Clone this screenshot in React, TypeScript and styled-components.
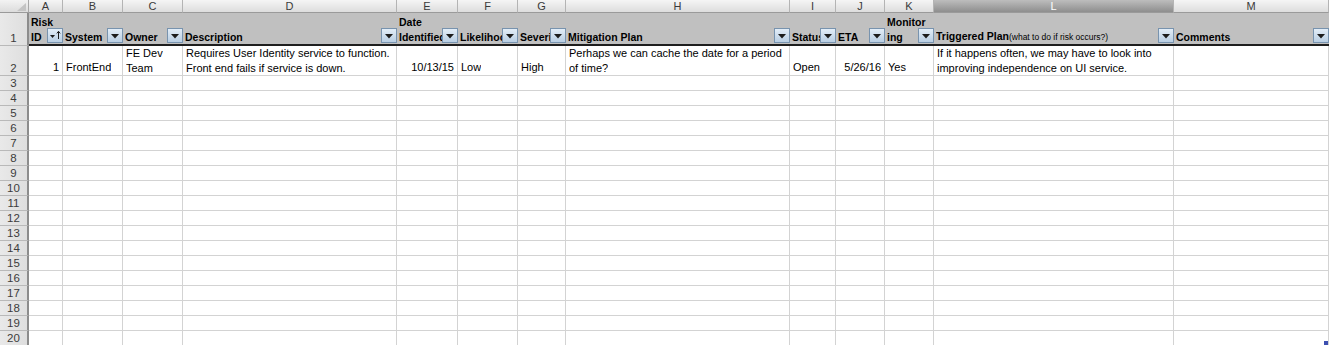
import React from "react";
import styled, { createGlobalStyle } from "styled-components";

const GlobalStyle = createGlobalStyle`
  html, body {
    margin: 0;
    padding: 0;
    background: #ffffff;
    overflow: hidden;
  }
  body {
    font-family: "Liberation Sans", Arial, sans-serif;
  }
`;

const COLUMNS = [
  { letter: "A", width: 34 },
  { letter: "B", width: 60 },
  { letter: "C", width: 60 },
  { letter: "D", width: 214 },
  { letter: "E", width: 61 },
  { letter: "F", width: 60 },
  { letter: "G", width: 48 },
  { letter: "H", width: 224 },
  { letter: "I", width: 46 },
  { letter: "J", width: 49 },
  { letter: "K", width: 49 },
  { letter: "L", width: 240 },
  { letter: "M", width: 155 },
];

const SELECTED_COLUMN = "L";

const Sheet = styled.div`
  display: grid;
  grid-template-columns: 29px ${COLUMNS.map((c) => `${c.width}px`).join(" ")};
  grid-template-rows: 13px 33px 30px repeat(18, 15px);
  width: 1329px;
  height: 345px;
  overflow: hidden;
  font-size: 11px;
  color: #000;
`;

const Corner = styled.div`
  position: relative;
  box-sizing: border-box;
  background: linear-gradient(#f3f3f3, #dcdcdc);
  border-right: 1px solid #a8a8a8;
  border-bottom: 1px solid #9a9a9a;
`;

const CornerMark = styled.div`
  position: absolute;
  right: 2px;
  bottom: 1px;
  width: 0;
  height: 0;
  border-left: 9px solid transparent;
  border-bottom: 8px solid #c4c4c4;
`;

const ColLetter = styled.div<{ $selected: boolean }>`
  box-sizing: border-box;
  display: flex;
  align-items: center;
  justify-content: center;
  font-size: 11px;
  line-height: 12px;
  color: ${(p) => (p.$selected ? "#ffffff" : "#3a3a3a")};
  background: ${(p) =>
    p.$selected ? "linear-gradient(#bdbdbd, #8e8e8e)" : "linear-gradient(#f5f5f5, #dddddd)"};
  border-right: 1px solid #b4b4b4;
  border-bottom: 1px solid #9a9a9a;
`;

const RowNum = styled.div`
  box-sizing: border-box;
  display: flex;
  align-items: flex-end;
  justify-content: center;
  padding-bottom: 0;
  font-size: 11.5px;
  line-height: 14px;
  color: #3c3c3c;
  background: linear-gradient(90deg, #e9e9e9, #dedede);
  border-right: 2px solid #8c8c8c;
  border-bottom: 1px solid #b9b9b9;
`;

const HeaderCell = styled.div`
  position: relative;
  box-sizing: border-box;
  display: flex;
  flex-direction: column;
  justify-content: flex-end;
  overflow: hidden;
  padding: 0 0 0 2px;
  background: #c0c0c0;
  border-bottom: 2px solid #1e1e1e;
  font-weight: bold;
  font-size: 10.5px;
  line-height: 15px;
`;

const Line = styled.div`
  white-space: nowrap;
  overflow: hidden;
`;

const HeaderLine = styled(Line)`
  margin-bottom: -1px;
  & + & {
    margin-top: 1px;
  }
`;

const Note = styled.span`
  font-weight: normal;
  font-size: 8.5px;
`;

const FilterButton = styled.div`
  position: absolute;
  right: 0;
  bottom: 1px;
  width: 16px;
  height: 15px;
  line-height: 0;
`;

const Cell = styled.div<{ $align: "left" | "right" }>`
  box-sizing: border-box;
  display: flex;
  flex-direction: column;
  justify-content: flex-end;
  align-items: ${(p) => (p.$align === "right" ? "flex-end" : "flex-start")};
  padding: 0 3px 0 3px;
  overflow: hidden;
  line-height: 15px;
  background: #ffffff;
  border-right: 1px solid #d3d3d3;
  border-bottom: 1px solid #d3d3d3;
`;

const SheetWrap = styled.div`
  position: relative;
  width: 1329px;
  height: 345px;
  overflow: hidden;
`;

const FillHandle = styled.div`
  position: absolute;
  right: 1px;
  bottom: 0;
  width: 4px;
  height: 4px;
  background: #3d4fb0;
`;

type HeaderDef = { lines: React.ReactNode[]; sorted?: boolean };

const HEADERS: HeaderDef[] = [
  { lines: ["Risk", "ID"], sorted: true },
  { lines: ["System"] },
  { lines: ["Owner"] },
  { lines: ["Description"] },
  { lines: ["Date", "Identified"] },
  { lines: ["Likelihood"] },
  { lines: ["Severity"] },
  { lines: ["Mitigation Plan"] },
  { lines: ["Status"] },
  { lines: ["ETA"] },
  { lines: ["Monitor", "ing"] },
  { lines: [<>Triggered Plan<Note>(what to do if risk occurs?)</Note></>] },
  { lines: ["Comments"] },
];

type DataCell = { lines: string[]; align?: "left" | "right" };

const RISK_ROW: DataCell[] = [
  { lines: ["1"], align: "right" },
  { lines: ["FrontEnd"] },
  { lines: ["FE Dev", "Team"] },
  { lines: ["Requires User Identity service to function.", "Front end fails if service is down."] },
  { lines: ["10/13/15"], align: "right" },
  { lines: ["Low"] },
  { lines: ["High"] },
  { lines: ["Perhaps we can cache the date for a period", "of time?"] },
  { lines: ["Open"] },
  { lines: ["5/26/16"], align: "right" },
  { lines: ["Yes"] },
  { lines: ["If it happens often, we may have to look into", "improving independence on UI service."] },
  { lines: [] },
];

const EMPTY_ROWS = Array.from({ length: 18 }, (_, i) => i + 3);

function FilterIcon({ sorted }: { sorted?: boolean }) {
  return (
    <svg width="16" height="15" viewBox="0 0 16 15">
      <defs>
        <linearGradient id="fbg" x1="0" y1="0" x2="0" y2="1">
          <stop offset="0" stopColor="#e4eef8" />
          <stop offset="1" stopColor="#b7cde2" />
        </linearGradient>
      </defs>
      <rect x="0.5" y="0.5" width="15" height="14" fill="url(#fbg)" stroke="#7893ae" />
      {sorted ? (
        <>
          <path d="M3 7 H8 L5.5 10 Z" fill="#1c1c1c" />
          <path d="M11.5 11 V3.5 M9.8 5.4 L11.5 3.3 L13.2 5.4" stroke="#1c1c1c" strokeWidth="1" fill="none" />
        </>
      ) : (
        <path d="M4 6 H12 L8 10.5 Z" fill="#1c1c1c" />
      )}
    </svg>
  );
}

export default function App() {
  return (
    <>
      <GlobalStyle />
      <SheetWrap>
        <Sheet>
          <Corner>
            <CornerMark />
          </Corner>
          {COLUMNS.map((c) => (
            <ColLetter key={c.letter} $selected={c.letter === SELECTED_COLUMN}>
              {c.letter}
            </ColLetter>
          ))}

          <RowNum>1</RowNum>
          {HEADERS.map((h, i) => (
            <HeaderCell key={i}>
              {h.lines.map((line, j) => (
                <HeaderLine key={j}>{line}</HeaderLine>
              ))}
              <FilterButton>
                <FilterIcon sorted={h.sorted} />
              </FilterButton>
            </HeaderCell>
          ))}

          <RowNum>2</RowNum>
          {RISK_ROW.map((cell, i) => (
            <Cell key={i} $align={cell.align ?? "left"}>
              {cell.lines.map((line, j) => (
                <Line key={j}>{line}</Line>
              ))}
            </Cell>
          ))}

          {EMPTY_ROWS.map((row) => (
            <React.Fragment key={row}>
              <RowNum>{row}</RowNum>
              {COLUMNS.map((c) => (
                <Cell key={c.letter} $align="left" />
              ))}
            </React.Fragment>
          ))}
        </Sheet>
        <FillHandle />
      </SheetWrap>
    </>
  );
}
